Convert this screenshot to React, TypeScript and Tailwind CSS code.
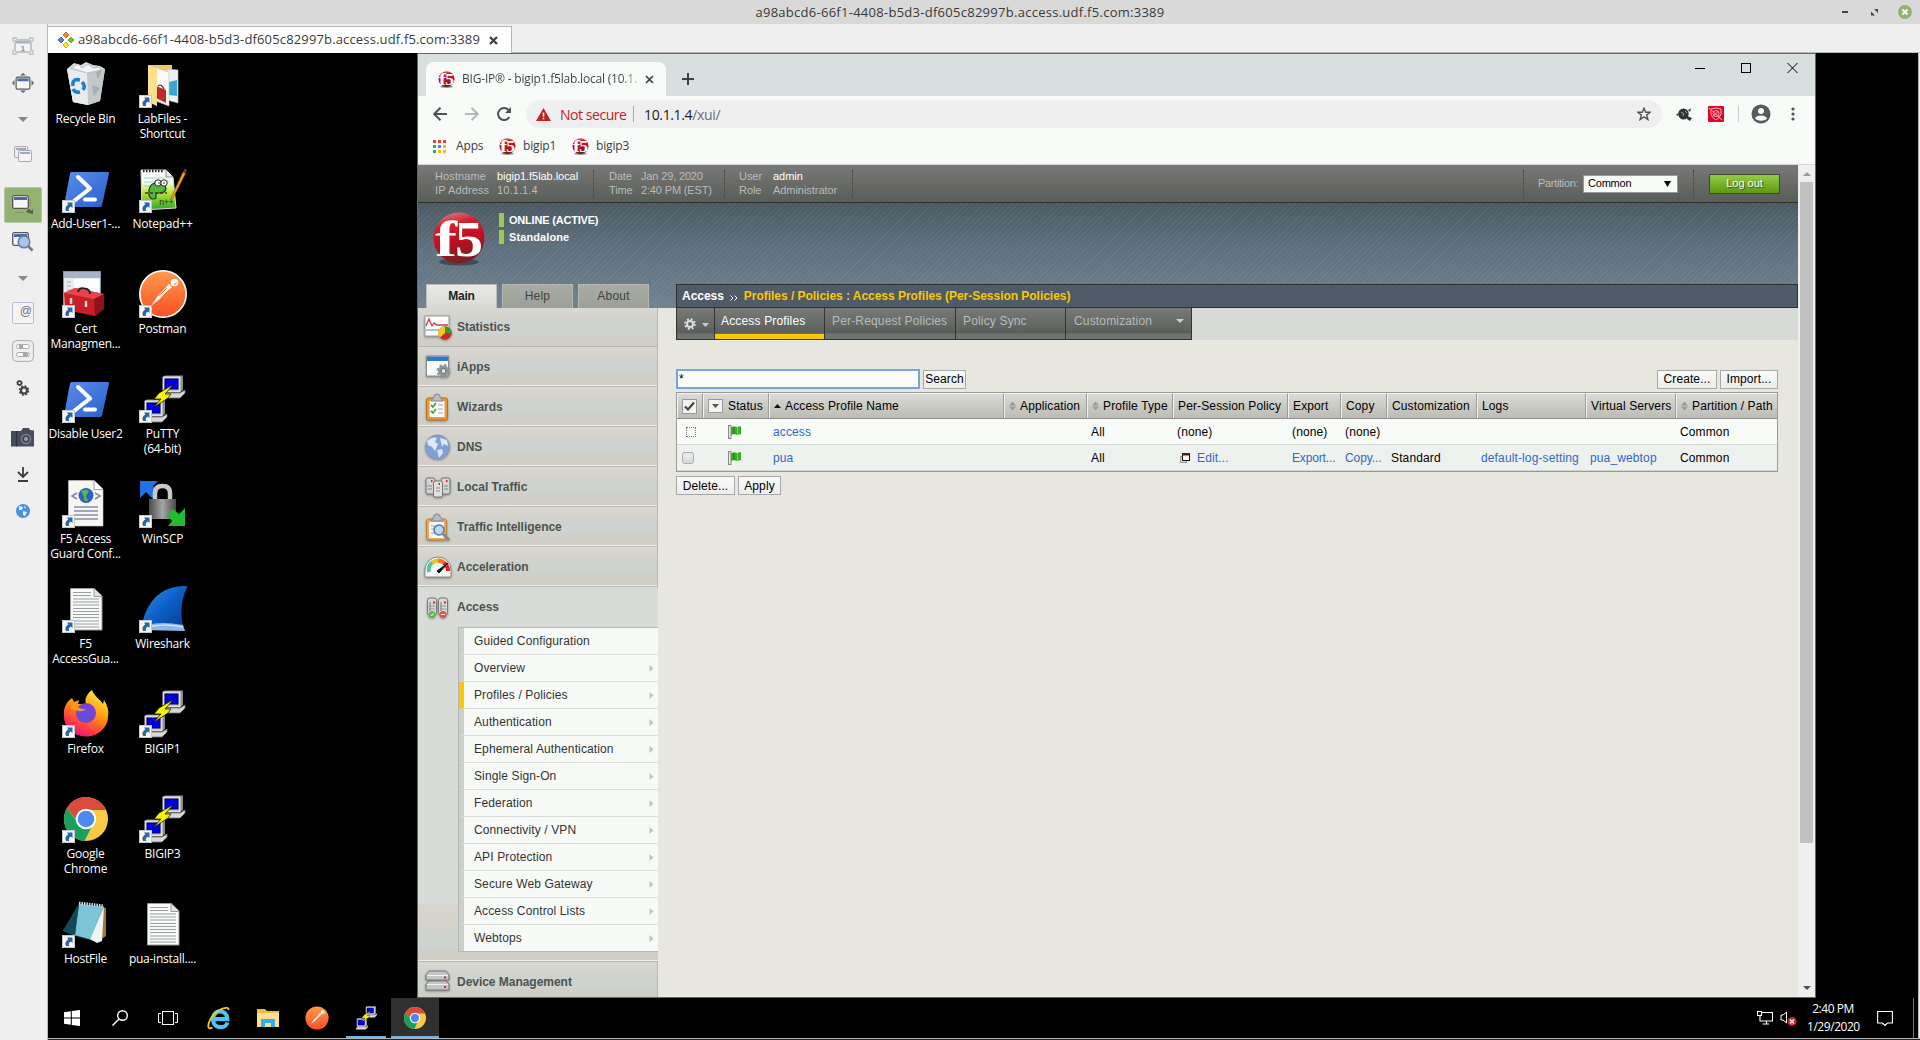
import React from "react";

/* ---------- shared drawings ---------- */

function F5Ball({ size }: { size: number }) {
  return (
    <svg width={size} height={size} viewBox="0 0 54 54" className="shrink-0">
      <defs>
        <linearGradient id="ball" x1="0" y1="0" x2="0.25" y2="1">
          <stop offset="0" stopColor="#e58f92" />
          <stop offset="0.3" stopColor="#d0222f" />
          <stop offset="0.6" stopColor="#c60d20" />
          <stop offset="1" stopColor="#7a2024" />
        </linearGradient>
      </defs>
      <ellipse cx="27" cy="50" rx="20" ry="3.5" fill="#1d2126" opacity="0.5" />
      <circle cx="27" cy="26" r="25.5" fill="url(#ball)" />
      <text x="3" y="44" fontSize="51" fontWeight="bold" textLength="22" lengthAdjust="spacingAndGlyphs" fill="#fff" className="font-['Liberation_Serif',serif]">
        f
      </text>
      <text x="23" y="44" fontSize="51" fontWeight="bold" textLength="28" lengthAdjust="spacingAndGlyphs" fill="#fff" className="font-['Liberation_Serif',serif]">
        5
      </text>
    </svg>
  );
}

function ShortcutArrow() {
  return (
    <svg width="13" height="13" viewBox="0 0 13 13" className="absolute bottom-0 left-0">
      <rect x="0.5" y="0.5" width="12" height="12" fill="#f7f7f7" stroke="#c4c8cc" />
      <path d="M5 2.5H10.5V8L8.8 6.4C6.8 7.5 6.4 9 7 11H4.2C2.6 8.5 3.8 6 6.4 4.6Z" fill="#2b62a8" />
    </svg>
  );
}

function PuttyArt({ size = 48 }: { size?: number }) {
  return (
    <svg width={size} height={size} viewBox="0 0 48 48">
      {[[25, 1], [7, 25]].map(([x, y]) => (
        <g key={x} transform={`translate(${x} ${y})`}>
          <path d="M-1 1L1 -0.500H19V14L16 16H0Z" fill="#8c8c8c" />
          <rect x="-1" y="1" width="17" height="15" fill="#c8c8c8" stroke="#fff" strokeWidth="0.8" />
          <rect x="1" y="3" width="13" height="10" fill="#0000e8" stroke="#000060" />
          <path d="M-3 19L0 17H16L21 14V17L16 22H-3Z" fill="#d8d8d8" stroke="#777" strokeWidth="0.8" />
        </g>
      ))}
      <path d="M35 9L20 18L15 24H22L14 33L29 23L32 19H26Z" fill="#f5f500" stroke="#000" strokeWidth="0.7" />
    </svg>
  );
}

function ChromeArt({ size }: { size: number }) {
  return (
    <svg width={size} height={size} viewBox="0 0 48 48">
      <circle cx="24" cy="24" r="22" fill="#f7ca45" />
      <path d="M5 13A22 22 0 0 0 22.500 46L31 29L24 31L16 28Z" fill="#1aa05d" />
      <path d="M24 2A22 22 0 0 1 43.800 15H24L16 27L5 13A22 22 0 0 1 24 2Z" fill="#d94b3d" />
      <circle cx="24" cy="24" r="10.300" fill="#fff" />
      <circle cx="24" cy="24" r="8.300" fill="#4b8bf0" />
    </svg>
  );
}

function PostmanArt({ size, ring = true }: { size: number; ring?: boolean }) {
  return (
    <svg width={size} height={size} viewBox="0 0 48 48">
      <defs>
        <linearGradient id="pm" x1="0" y1="0" x2="0" y2="1">
          <stop offset="0" stopColor="#ff9a4a" />
          <stop offset="1" stopColor="#f94f26" />
        </linearGradient>
      </defs>
      <circle cx="24" cy="24" r="23.200" fill="url(#pm)" stroke={ring ? "#fff" : "none"} strokeWidth="1.6" />
      <circle cx="35.500" cy="12.500" r="3.800" fill="#fff" />
      <path d="M37 12.500A2 2 0 0 1 35 14.500" stroke="#f9702f" fill="none" />
      <path d="M30 14L33 17L22 28L12 36L18 27Z" fill="#fff" />
      <path d="M28 18L20 26M31 19L21 29" stroke="#f9702f" strokeWidth="0.9" />
    </svg>
  );
}

function PowerShellArt() {
  return (
    <svg width="48" height="48" viewBox="0 0 48 48">
      <defs>
        <linearGradient id="ps" x1="0" y1="0" x2="1" y2="1">
          <stop offset="0" stopColor="#5a8df0" />
          <stop offset="1" stopColor="#2a60c4" />
        </linearGradient>
      </defs>
      <path d="M9.500 7H46Q47.500 7 47 8.500L40 40.500Q39.500 42 38 42H3Q1.500 42 2 40.500L8 8.500Q8.300 7 9.500 7Z" fill="url(#ps)" />
      <path d="M16 12L28 23.500L12 36M23 34.500H33" fill="none" stroke="#fff" strokeWidth="4" strokeLinecap="round" strokeLinejoin="round" />
    </svg>
  );
}

function TextDocArt() {
  return (
    <svg width="48" height="48" viewBox="0 0 48 48">
      <path d="M8.500 3.500H32L40 11V45H8.500Z" fill="#f7f9f9" stroke="#9a9a9a" />
      <path d="M32 3.500V11.500H40" fill="#dfe2e2" stroke="#9a9a9a" />
      <path d="M11 7.500H29M11 10.500H29M11 14H37M11 17H37M11 20H37M11 23.500H37M11 26.500H37M11 29.500H37M11 32.500H37M11 36H37M11 39H37M11 42H37" stroke="#9b9fa0" />
    </svg>
  );
}

function RecycleArt() {
  return (
    <svg width="48" height="48" viewBox="0 0 48 48">
      <path d="M5 9L12 3L19 5L24 2L31 5L38 6L43 9L38 41L26 45L11 42Z" fill="#dcdedf" />
      <path d="M5 9L25 13L43 9L38 41L26 45L11 42Z" fill="#c3c8ca" />
      <path d="M5 9L25 13L26 45L11 42Z" fill="#e9ebec" />
      <path d="M34 12L40 9L36 20ZM30 25L38 28L32 36Z" fill="#a7adb0" />
      <path d="M9 8L16 4L20 8L26 4L31 8L38 7L39 10L25 13Z" fill="#f3f4f4" stroke="#a9aeb0" strokeWidth="0.7" />
      <g fill="none" stroke="#1683d8" strokeWidth="3.6">
        <path d="M11 26Q10 20 15 19.500L18 20" />
        <path d="M20 22Q24 26 21 30" />
        <path d="M18 32Q13 33 11 29" />
      </g>
    </svg>
  );
}

function FolderFilesArt() {
  return (
    <svg width="48" height="48" viewBox="0 0 48 48">
      <path d="M9 5H33V40H9Z" fill="#f0c963" />
      <path d="M28 9L39 10V43L28 40Z" fill="#eef1f3" stroke="#b9bcc0" strokeWidth="0.6" />
      <path d="M30 22L38 20V36L30 35Z" fill="#3aa7d0" />
      <path d="M14 7L30 12V46L14 40Z" fill="#fafafa" stroke="#c0c0c0" strokeWidth="0.6" />
      <path d="M17 26L27 30V43L17 38Z" fill="#c8242c" />
      <path d="M19 26Q22 23 25 29" fill="none" stroke="#333" strokeWidth="1.2" />
      <path d="M9 5L18 9V46L9 42Z" fill="#fbe08d" />
    </svg>
  );
}

function NotepadPPArt() {
  return (
    <svg width="48" height="48" viewBox="0 0 48 48">
      <defs>
        <linearGradient id="npp" x1="0" y1="0" x2="0" y2="1">
          <stop offset="0.3" stopColor="#f6fbf4" />
          <stop offset="0.55" stopColor="#b9e83a" />
          <stop offset="1" stopColor="#2fa32b" />
        </linearGradient>
      </defs>
      <path d="M2 5H27L34 12L37 43L3 45Z" fill="url(#npp)" stroke="#ddd" />
      <path d="M4 6H25" stroke="#222" strokeWidth="2.5" strokeDasharray="1.5 1.5" />
      <path d="M5 13H26M5 17H30M5 21H12" stroke="#a7c9da" />
      <path d="M27 5V12H34" fill="#e8e8e8" stroke="#777" strokeWidth="0.8" />
      <path d="M10 30Q9 18 18 18Q26 17 27 24Q26 28 20 28Q16 28 17 33Q12 36 10 30Z" fill="#4fb93d" stroke="#173e12" strokeWidth="1.2" />
      <circle cx="19" cy="18" r="3.200" fill="#fff" stroke="#222" />
      <circle cx="25" cy="18" r="3.200" fill="#fff" stroke="#222" />
      <circle cx="20" cy="18" r="0.800" fill="#222" />
      <circle cx="25" cy="18" r="0.800" fill="#222" />
      <path d="M6 28H28" stroke="#4d2d50" strokeWidth="1.4" strokeDasharray="3 2" />
      <text x="20" y="40" fontSize="9" fill="#173e12" className="font-['Liberation_Mono',monospace]" textLength="15">n++</text>
      <path d="M31 35L44 7L46.500 8.500L34 33Z" fill="#efa51b" stroke="#8d5a10" strokeWidth="0.6" />
      <path d="M44 7L45.500 3.500L48 5L46.500 8.500Z" fill="#8a2c2c" />
    </svg>
  );
}

function ToolboxArt() {
  return (
    <svg width="48" height="48" viewBox="0 0 48 48">
      <rect x="1.500" y="1.500" width="37" height="34" fill="#e9ecef" stroke="#8494a8" />
      <rect x="2" y="2" width="36" height="6" fill="#a9b5c6" />
      <rect x="12" y="9" width="25" height="22" fill="#fdfdfd" />
      <path d="M5 12H9M5 16H9M5 20H9" stroke="#aaa" />
      <path d="M2 23L13 18L42 24V39L33 46L3 40Z" fill="#c81f25" />
      <path d="M2 23L13 18L42 24L32 29Z" fill="#e8444a" />
      <path d="M32 29L42 24V39L33 46Z" fill="#8e1217" />
      <path d="M16 22Q17 17 22 18.500Q28 19 28 24" fill="none" stroke="#222" strokeWidth="2" />
      <path d="M9 28V34M24 31V37" stroke="#d8d8d8" strokeWidth="2.500" />
    </svg>
  );
}

function CodeDocArt() {
  return (
    <svg width="48" height="48" viewBox="0 0 48 48">
      <path d="M6.500 0.500H32L41 9V46H6.500Z" fill="#f6f6f3" stroke="#ccc" strokeWidth="0.6" />
      <path d="M32 0.500V9.500H41" fill="#fff" stroke="#888" strokeWidth="0.8" />
      <path d="M15 13L10 16L15 19M33 13L38 16L33 19" fill="none" stroke="#8487a8" strokeWidth="1.6" />
      <circle cx="24" cy="15.500" r="7.500" fill="#2f5fc4" />
      <path d="M19 11Q24 8 27 11L24 16L26 21Q21 22 22 17Z" fill="#57b64c" />
      <path d="M12 27H36M12 31H36M12 35H36M12 39H36" stroke="#8a8db0" strokeWidth="1.6" />
    </svg>
  );
}

function WinScpArt() {
  return (
    <svg width="48" height="48" viewBox="0 0 48 48">
      <defs>
        <linearGradient id="lock" x1="0" y1="0" x2="1" y2="0">
          <stop offset="0" stopColor="#4a4a4a" />
          <stop offset="0.5" stopColor="#a5a5a5" />
          <stop offset="1" stopColor="#4a4a4a" />
        </linearGradient>
      </defs>
      <path d="M1 1H19L14 6L19 12L13 18L7 12L1 18Z" fill="#1f72e8" />
      <path d="M16 20V13Q16 6 23.500 6Q31 6 31 13V20" fill="none" stroke="#c9c9c9" strokeWidth="4.500" />
      <rect x="10" y="19" width="27" height="20" fill="url(#lock)" />
      <path d="M46 46H29L33 41L28 35L34 29L40 34L46 28Z" fill="#22bb33" />
    </svg>
  );
}

function WiresharkArt() {
  return (
    <svg width="48" height="48" viewBox="0 0 48 48">
      <defs>
        <linearGradient id="ws" x1="0" y1="0" x2="1" y2="1">
          <stop offset="0" stopColor="#3a8df0" />
          <stop offset="0.5" stopColor="#0b5ec4" />
          <stop offset="1" stopColor="#063a90" />
        </linearGradient>
      </defs>
      <path d="M48 1C22 0 7 16 2 44L46 46C41 34 41 16 48 3Z" fill="url(#ws)" />
      <path d="M8 40Q22 36 44 40L46 46L3 45Z" fill="#8fb6ea" />
      <path d="M10 42Q24 38 44 42" fill="none" stroke="#fff" strokeWidth="0.8" />
    </svg>
  );
}

function FirefoxArt() {
  return (
    <svg width="48" height="48" viewBox="0 0 48 48">
      <defs>
        <linearGradient id="ff" x1="0.8" y1="0" x2="0.3" y2="1">
          <stop offset="0" stopColor="#fff04a" />
          <stop offset="0.45" stopColor="#ff980e" />
          <stop offset="0.8" stopColor="#ff3647" />
          <stop offset="1" stopColor="#e31587" />
        </linearGradient>
      </defs>
      <path d="M30 0C32 6 38 9 41 14L42 10C46 16 47 22 46 27A22 20 0 0 1 2 26C1 19 4 12 10 8L12 12L17 10L16 14H24C22 8 26 3 30 0Z" fill="url(#ff)" />
      <circle cx="24" cy="23" r="10" fill="#7a3fd4" />
      <circle cx="22" cy="25" r="7" fill="#5c55dd" opacity="0.7" />
      <path d="M9 18Q18 24 24 19Q16 20 12 13Z" fill="#ff9a20" />
    </svg>
  );
}

function HostFileArt() {
  return (
    <svg width="48" height="48" viewBox="0 0 48 48">
      <path d="M38 6L44 8L44 36L38 40Z" fill="#a8752e" />
      <path d="M17 4L42 7L36 42L14 36L1 31Z" fill="#2c7f92" />
      <path d="M17 4L42 7L28 39L13 35Z" fill="#7cc5d6" />
      <path d="M42 7L40 41L35 43L28 39Z" fill="#eef4f5" />
      <path d="M17 4L13 35L1 31Z" fill="#134a58" />
      <path d="M17 3L42 6" stroke="#ddd" strokeWidth="3" strokeDasharray="1.500 1" />
    </svg>
  );
}

/* ---------- desktop ---------- */

type DesktopItem = { lines: string[]; art: React.ReactNode; shortcut?: boolean };

const desktopItems: DesktopItem[] = [
  { lines: ["Recycle Bin"], art: <RecycleArt />, shortcut: false },
  { lines: ["LabFiles -", "Shortcut"], art: <FolderFilesArt /> },
  { lines: ["Add-User1-..."], art: <PowerShellArt /> },
  { lines: ["Notepad++"], art: <NotepadPPArt /> },
  { lines: ["Cert", "Managmen..."], art: <ToolboxArt /> },
  { lines: ["Postman"], art: <PostmanArt size={48} /> },
  { lines: ["Disable User2"], art: <PowerShellArt /> },
  { lines: ["PuTTY", "(64-bit)"], art: <PuttyArt /> },
  { lines: ["F5 Access", "Guard Conf..."], art: <CodeDocArt /> },
  { lines: ["WinSCP"], art: <WinScpArt /> },
  { lines: ["F5", "AccessGua..."], art: <TextDocArt /> },
  { lines: ["Wireshark"], art: <WiresharkArt /> },
  { lines: ["Firefox"], art: <FirefoxArt /> },
  { lines: ["BIGIP1"], art: <PuttyArt /> },
  { lines: ["Google", "Chrome"], art: <ChromeArt size={48} /> },
  { lines: ["BIGIP3"], art: <PuttyArt /> },
  { lines: ["HostFile"], art: <HostFileArt /> },
  { lines: ["pua-install...."], art: <TextDocArt />, shortcut: false },
];

function DesktopIcons() {
  return (
    <div className="-ml-px grid w-[154px] auto-rows-[105px] grid-cols-[77px_77px] pt-[7px]">
      {desktopItems.map((d) => (
        <div key={d.lines.join()} className="flex flex-col items-center">
          <div className="relative h-[48px] w-[48px]">
            {d.art}
            {d.shortcut !== false && <ShortcutArrow />}
          </div>
          <div className="mt-[3px] text-center font-['Open_Sans',sans-serif] text-[12px] leading-[15px] tracking-[-0.25px] whitespace-nowrap text-white">
            {d.lines.map((l) => (
              <div key={l}>{l}</div>
            ))}
          </div>
        </div>
      ))}
    </div>
  );
}

function Taskbar() {
  return (
    <div className="absolute inset-x-0 bottom-0 flex h-10 items-stretch bg-black">
      <div className="flex w-12 items-center justify-center">
        <svg width="16" height="16" viewBox="0 0 16 16" fill="#fff">
          <path d="M0 2.200L6.800 1.200V7.500H0ZM7.800 1L16 0V7.500H7.800ZM0 8.500H6.800V14.800L0 13.800ZM7.800 8.500H16V16L7.800 15Z" />
        </svg>
      </div>
      <div className="flex w-12 items-center justify-center">
        <svg width="16" height="16" viewBox="0 0 16 16" fill="none" stroke="#fff" strokeWidth="1.4">
          <circle cx="10.500" cy="5.500" r="4.800" />
          <path d="M7 9L0.500 15.500" />
        </svg>
      </div>
      <div className="flex w-12 items-center justify-center">
        <svg width="20" height="14" viewBox="0 0 20 14" fill="none" stroke="#fff">
          <rect x="4.500" y="0.500" width="11" height="13" />
          <path d="M3 2.500H0.500V11.500H3M17 2.500H19.500V11.500H17" />
        </svg>
      </div>
      <div className="ml-[3px] flex w-12 items-center justify-center">
        <svg width="24" height="24" viewBox="0 0 24 24" fill="none">
          <path d="M6 13.200H20.300C20.300 3.500 6.500 2.500 6 12.500C5.500 23 18.500 23.500 20.500 16.500" stroke="#4cc5f4" strokeWidth="4.200" />
          <path d="M21.500 4C22.500 -1 9 3 3.500 13C0 20 0.500 24 5.500 21.500" stroke="#f5c52c" strokeWidth="1.800" />
        </svg>
      </div>
      <div className="flex w-[50px] items-center justify-center">
        <svg width="22" height="20" viewBox="0 0 22 20">
          <path d="M0 1H8L10 3H22V19H0Z" fill="#e8bd4a" />
          <path d="M0 5H22V19H0Z" fill="#fbe093" />
          <path d="M4 19V11H18V19H14V15H8V19Z" fill="#33aee0" />
        </svg>
      </div>
      <div className="flex w-12 items-center justify-center">
        <PostmanArt size={24} ring={false} />
      </div>
      <div className="ml-[5px] flex w-10 flex-col items-center justify-between border-b-2 border-[#6db4e8] pt-2">
        <PuttyArt size={24} />
      </div>
      <div className="ml-[5px] flex w-12 items-start justify-center border-b-2 border-[#6db4e8] bg-[#303030] pt-2">
        <ChromeArt size={24} />
      </div>
      <div className="ml-auto flex items-center text-white">
        <svg width="16" height="14" viewBox="0 0 16 14" fill="none" stroke="#fff" strokeWidth="1.100">
          <path d="M5 1.500H15.500V10H3V5M0.500 0.500H4.500V4.500H0.500ZM9.500 10V13M5.500 13H12" />
        </svg>
        <svg width="18" height="16" viewBox="0 0 18 16" className="ml-[7px]">
          <path d="M1 5H3L6.500 2V13L3 10H1Z" fill="none" stroke="#fff" />
          <circle cx="12" cy="11.500" r="4.500" fill="#d8202c" />
          <path d="M10 9.500L14 13.500M14 9.500L10 13.500" stroke="#fff" strokeWidth="1.200" />
        </svg>
        <div className="ml-[9px] w-[52px] text-center font-['Open_Sans',sans-serif] text-[12px] leading-[18px] tracking-[-0.45px] whitespace-nowrap">
          <div>2:40 PM</div>
          <div>1/29/2020</div>
        </div>
        <svg width="16" height="17" viewBox="0 0 16 17" className="ml-[18px]" fill="none" stroke="#fff" strokeWidth="1.100">
          <path d="M0.600 1.500H15.400V13H10.500L8 15.500L5.500 13H0.600Z" />
        </svg>
        <div className="mr-1 ml-[20px] h-10 w-px bg-[#777]" />
      </div>
    </div>
  );
}

/* ---------- remote viewer toolbar ---------- */

function WindowGlyph() {
  return (
    <g>
      <rect x="0.700" y="0.700" width="15.600" height="12.600" rx="1.500" fill="#f6f6f6" stroke="#555" strokeWidth="1.300" />
      <rect x="2" y="2" width="13" height="3" fill="#4a6da8" />
    </g>
  );
}

function CaretDown() {
  return (
    <svg width="10" height="5" viewBox="0 0 10 5">
      <path d="M0 0H10L5 5Z" fill="#888" />
    </svg>
  );
}

function RemoteToolbar() {
  return (
    <div className="flex w-[47px] shrink-0 flex-col items-center bg-[#efefef] pr-px">
      <div className="flex h-[42px] items-center justify-center">
        <svg width="22" height="18" viewBox="0 0 22 18" className="mt-0.5">
          <path d="M1 5V1H5M17 1H21V5M21 13V17H17M5 17H1V13" fill="none" stroke="#bbb" strokeWidth="1.300" />
          <rect x="3" y="3" width="16" height="12" rx="1.500" fill="#f3f3f3" stroke="#999" />
          <rect x="4" y="4" width="14" height="2.500" fill="#a8b6cf" />
          <text x="8.800" y="13.500" fontSize="7.500" fontWeight="bold" fill="#8a8a8a" className="font-['Liberation_Sans',sans-serif]">1</text>
        </svg>
      </div>
      <div className="flex h-[34px] items-center justify-center">
        <svg width="22" height="20" viewBox="0 0 22 20">
          <g transform="translate(3.500 3.500) scale(.88 .95)"><WindowGlyph /></g>
          <path d="M8 2.500L11 0L14 2.500ZM8 17.500L11 20L14 17.500ZM2.500 7L0 10L2.500 13ZM19.500 7L22 10L19.500 13Z" fill="#666" />
        </svg>
      </div>
      <div className="flex h-[38px] items-center"><CaretDown /></div>
      <div className="flex h-[32px] items-center justify-center">
        <svg width="18" height="16" viewBox="0 0 18 16" opacity="0.55">
          <rect x="0.600" y="0.600" width="13" height="11" rx="1" fill="#f4f4f4" stroke="#666" />
          <rect x="2" y="2" width="10" height="2" fill="#5673a5" />
          <rect x="4.600" y="4.600" width="13" height="11" rx="1" fill="#f8f8f8" stroke="#666" />
          <rect x="6" y="6" width="10" height="2" fill="#5673a5" />
        </svg>
      </div>
      <div className="mt-[17px] flex h-[36px] w-[38px] items-center justify-center rounded-[2px] border border-[#b6c5a5] bg-[#92b372]">
        <svg width="22" height="20" viewBox="0 0 22 20">
          <WindowGlyph />
          <path d="M14 17L20 19H21V14L19 16L17 13.500Z" fill="#5b5f50" />
          <path d="M18.500 4V11M3 17.500H12" stroke="#6f8a55" strokeDasharray="2 1" />
        </svg>
      </div>
      <div className="flex h-[38px] items-center justify-center">
        <svg width="22" height="20" viewBox="0 0 22 20">
          <WindowGlyph />
          <circle cx="12" cy="10" r="5.800" fill="#a9c4ea" stroke="#6c7f9c" strokeWidth="1.600" />
          <path d="M16.500 14.500L20.500 18.500" stroke="#777" strokeWidth="2.600" />
        </svg>
      </div>
      <div className="flex h-[34px] items-center"><CaretDown /></div>
      <div className="mt-[7px] flex h-[22px] w-[22px] items-start justify-end rounded-[2px] border border-[#b8bfd0] bg-[#f4f4f4] pr-px font-['Liberation_Sans',sans-serif] text-[12px] leading-[16px] text-[#6d7186]">
        @
      </div>
      <svg width="22" height="22" viewBox="0 0 22 22" className="mt-[16px]" fill="none" stroke="#aaa">
        <rect x="0.600" y="0.600" width="20.800" height="20.800" rx="4" />
        <rect x="4.500" y="4.500" width="13" height="4" rx="2" fill="#fff" />
        <rect x="4.500" y="12.500" width="13" height="4" rx="2" fill="#fff" />
        <path d="M7 6.500H11M11 14.500H16" strokeWidth="3" />
      </svg>
      <svg width="14" height="16" viewBox="0 0 14 16" className="mt-[18px]" fill="none" stroke="#444">
        <circle cx="3.500" cy="3" r="1.900" strokeWidth="1.600" />
        <circle cx="3.500" cy="3" r="2.700" strokeDasharray="1 1" />
        <circle cx="8" cy="10.500" r="3" strokeWidth="2.200" />
        <circle cx="8" cy="10.500" r="4.500" strokeWidth="1.500" strokeDasharray="2 1.530" />
      </svg>
      <svg width="24" height="19" viewBox="0 0 24 19" className="mt-[32px]">
        <path d="M0 3H10L12 0H18L19 2L23 2.500V18.500H0Z" fill="#474c5c" />
        <path d="M5.500 3V18.500" stroke="#2d313e" />
        <circle cx="15" cy="11" r="5.300" fill="#7b8396" />
        <circle cx="15" cy="11" r="3.800" fill="#3f4455" />
        <circle cx="15" cy="11" r="2" fill="#99a2b8" />
      </svg>
      <svg width="12" height="15" viewBox="0 0 12 15" className="mt-[20px]" fill="none" stroke="#3c3c3c" strokeWidth="1.800">
        <path d="M6 0V10M1 5L6 10L11 5M1 14H11" />
      </svg>
      <svg width="14" height="14" viewBox="0 0 14 14" className="mt-[22px]">
        <circle cx="7" cy="7" r="7" fill="#4a90e2" />
        <path d="M3 2L7 3L6 6L3 6ZM8 2L10 3L9 5ZM7 7L11 8L9 12L7 11Z" fill="#e9f2fd" />
      </svg>
    </div>
  );
}

/* ---------- admin page ---------- */

const navArt: Record<string, React.ReactNode> = {
  Statistics: (
    <>
      <rect x="1" y="2" width="24" height="20" fill="#fbfbfb" stroke="#999" />
      <path d="M2 12L5 5L8 12L10 9L13 11H24" fill="none" stroke="#c4424a" strokeWidth="1.300" />
      <path d="M2 16H24" stroke="#9fc3e0" strokeWidth="2" />
      <circle cx="21" cy="19" r="6.500" fill="#d8232c" stroke="#7a5a20" strokeWidth="0.500" />
      <path d="M21 19V12.500A6.500 6.500 0 0 0 16 23.500Z" fill="#f1c91f" />
      <path d="M21 19V12.500A6.500 6.500 0 0 1 27.500 19Z" fill="#3a9a2d" />
    </>
  ),
  iApps: (
    <>
      <rect x="2.500" y="3" width="22" height="20" fill="#f9fcfd" stroke="#8c8c8c" />
      <rect x="3" y="3.500" width="21" height="4.500" fill="#2f7cc4" />
      <circle cx="19.500" cy="18" r="5.500" fill="#8d9798" stroke="#8d9798" strokeWidth="3" strokeDasharray="2.300 2" />
      <circle cx="19.500" cy="18" r="2.500" fill="#dfe3e3" stroke="#667" />
    </>
  ),
  Wizards: (
    <>
      <rect x="2.500" y="5" width="21" height="22" rx="2" fill="#eb9a33" stroke="#b87018" />
      <rect x="5.500" y="8" width="15" height="16" fill="#fbfbff" />
      <path d="M7 12L9 14L12 10M7 18L9 20L12 16" fill="none" stroke="#45a92c" strokeWidth="1.800" />
      <path d="M14 12H19M14 16H19M14 20H19" stroke="#99a3cc" />
      <path d="M7 8L10 4A3 3 0 0 1 16 4L19 8Z" fill="#b9bdbf" stroke="#888" />
    </>
  ),
  DNS: (
    <>
      <circle cx="13.500" cy="14" r="12" fill="#7f9fd8" stroke="#8a97b0" />
      <path d="M3 8Q8 3 13 5L11 9L14 11L11 18L8 14L4 12ZM16 5L23 7L24 13L20 11L18 14L17 10ZM13 17L18 16L19 20L15 25Z" fill="#dbe8fa" />
    </>
  ),
  "Local Traffic": (
    <>
      <rect x="2" y="5" width="9" height="16" rx="2" fill="#d4d4d4" stroke="#777" />
      <rect x="17" y="5" width="9" height="16" rx="2" fill="#d4d4d4" stroke="#777" />
      <rect x="9.500" y="8" width="9" height="16" rx="2" fill="#e0e0e0" stroke="#777" />
      <path d="M3.500 13H8M3.500 16H8M12 15H16M12 18H16M20 13H24M20 16H24" stroke="#888" />
      <path d="M7 8H8.500M14.500 11H16M22 8H23.500" stroke="#e02020" strokeWidth="1.800" />
    </>
  ),
  "Traffic Intelligence": (
    <>
      <rect x="2.500" y="6" width="20" height="21" rx="2" fill="#e9a95c" stroke="#b98040" />
      <rect x="5" y="9" width="15" height="16" fill="#f6f8fb" />
      <path d="M7 8L10 4A3 3 0 0 1 16 4L19 8Z" fill="#b9bdbf" stroke="#888" />
      <path d="M7 13H12M7 16H11M7 20H12" stroke="#8fa3c8" />
      <circle cx="15" cy="17" r="5" fill="#bcd8f5" stroke="#5577a8" strokeWidth="1.500" />
      <path d="M19 21L25 27" stroke="#888" strokeWidth="3" />
    </>
  ),
  Acceleration: (
    <>
      <path d="M1 23V17A13 13 0 0 1 27 17V23Q27 24 26 24H2Q1 24 1 23Z" fill="#f6f6f4" stroke="#888" />
      <path d="M5 19A9 9 0 0 1 9 9" fill="none" stroke="#59c2a4" strokeWidth="4" />
      <path d="M8 10A9 9 0 0 1 15 7.500" fill="none" stroke="#edc02b" strokeWidth="4" />
      <path d="M14 7.500A9 9 0 0 1 21 11" fill="none" stroke="#ef7c1f" strokeWidth="4" />
      <path d="M20 10A9 9 0 0 1 24 18" fill="none" stroke="#dd2020" strokeWidth="4" />
      <path d="M13 18L24 10L15 20Z" fill="#111" stroke="#111" />
    </>
  ),
  Access: (
    <>
      <rect x="3.500" y="4" width="9" height="17" rx="2.500" fill="#d8d8d8" stroke="#777" />
      <rect x="14.500" y="4" width="9" height="17" rx="2.500" fill="#d8d8d8" stroke="#777" />
      <path d="M6 8V17M17 8V17" stroke="#aaa" strokeWidth="2" />
      <path d="M5 12H11M5 15H11M16 12H22M16 15H22" stroke="#888" strokeWidth="0.800" />
      <path d="M9 8.500H11M20 8.500H22" stroke="#e02020" strokeWidth="1.800" />
      <circle cx="8" cy="20.500" r="3.500" fill="#58b848" />
      <path d="M6.500 20.500L7.700 21.700L9.700 19.300" fill="none" stroke="#fff" />
      <circle cx="19" cy="20.500" r="3.500" fill="#e2504a" />
      <path d="M17 20.500H21" stroke="#fff" />
    </>
  ),
  "Device Management": (
    <>
      <path d="M2 7L5 3H22L25 7V12H2Z" fill="#c4c6c6" stroke="#777" />
      <path d="M2 16L5 13H22L25 16V22H2Z" fill="#c4c6c6" stroke="#777" />
      <path d="M3 7.500H24M3 16.500H24" stroke="#f4f4f4" />
      <path d="M20 9.500H22M20 19H22" stroke="#e02040" strokeWidth="2" />
    </>
  ),
};

function NavIcon({ name }: { name: string }) {
  return (
    <svg width="28" height="28" viewBox="0 0 28 28" className="mt-px ml-[6px] shrink-0 drop-shadow-[0_1px_1px_rgba(0,0,0,0.35)]">
      {navArt[name]}
    </svg>
  );
}

function NavRow({ name, className = "h-10" }: { name: string; className?: string }) {
  return (
    <div
      className={`flex shrink-0 items-center border-r border-b border-[#b4b8b4] bg-[linear-gradient(#dad8d3_0px,#d4d1cb_12px,#cfd3cf_12px,#cfd3cf_26px,#d0cfc8_27px,#d0cec6_38px,#f0f0ec_38px)] ${className}`}
    >
      <NavIcon name={name} />
      <span className="ml-[5px] text-[12px] font-bold tracking-[-0.03px] text-[#4d524d]">{name}</span>
    </div>
  );
}

const subItems = [
  "Guided Configuration",
  "Overview",
  "Profiles / Policies",
  "Authentication",
  "Ephemeral Authentication",
  "Single Sign-On",
  "Federation",
  "Connectivity / VPN",
  "API Protection",
  "Secure Web Gateway",
  "Access Control Lists",
  "Webtops",
];

function SideNav() {
  return (
    <div className="flex w-[240px] shrink-0 flex-col overflow-hidden">
      <NavRow name="Statistics" className="h-[39px]" />
      {["iApps", "Wizards", "DNS", "Local Traffic", "Traffic Intelligence", "Acceleration"].map((n) => (
        <NavRow key={n} name={n} />
      ))}
      <div className="flex h-[375px] shrink-0 flex-col border-b border-[#b4b8b4] bg-[linear-gradient(#d8dbd7_0px,#d8dcd8_317px,#d8d5cf_317px,#d5d2cb_343px,#cfd3cf_344px,#cfd3cf_362px,#d0cec6_363px,#d0cec6_373px,#f0f0ec_373px)]">
        <div className="flex h-10 shrink-0 items-center">
          <NavIcon name="Access" />
          <span className="ml-[5px] text-[12px] font-bold text-[#4d524d]">Access</span>
        </div>
        <div className="ml-10 border-y border-l border-[#b4b8b4] bg-[#f7faf7]">
          {subItems.map((s, i) => (
            <div
              key={s}
              className={`flex items-center justify-between border-l-[5px] pr-1 pl-[10px] text-[12px] tracking-[0.120px] text-[#333] ${
                s === "Profiles / Policies" ? "border-l-[#fac800]" : "border-l-[#ccd0cc]"
              } ${i < subItems.length - 1 ? "h-[27px] border-b border-b-[#dcdfdc]" : "h-[26px]"}`}
            >
              <span className="whitespace-nowrap">{s}</span>
              {i > 0 && (
                <svg width="5" height="7" viewBox="0 0 5 7">
                  <path d="M0.500 0L4.500 3.500L0.500 7Z" fill="#c2c4c2" />
                </svg>
              )}
            </div>
          ))}
        </div>
      </div>
      <NavRow name="Device Management" />
    </div>
  );
}

function Sorter() {
  return (
    <svg width="7" height="10" viewBox="0 0 7 10" className="mr-[4px] shrink-0">
      <path d="M0 4.500L3.500 0.500L7 4.500ZM0 5.500L3.500 9.500L7 5.500Z" fill="#9a9a9a" />
    </svg>
  );
}

function Flag() {
  return (
    <svg width="14" height="14" viewBox="0 0 14 14">
      <rect x="0.500" y="0.500" width="2.500" height="13" fill="#e8e8e8" stroke="#888" />
      <path d="M3 2L6 1.500L9 2L13 1V9L9 10L6 9L3 10Z" fill="#35b020" />
      <path d="M6 1.500V9" stroke="#1c7c12" />
      <path d="M9.500 2V9.500" stroke="#7bdc5f" />
    </svg>
  );
}

function Btn({ children, className }: { children: React.ReactNode; className: string }) {
  return (
    <div
      className={`flex h-[19px] items-center justify-center border border-[#a8a8a8] bg-linear-to-b from-[#f9fbf9] to-[#ececec] text-[12px] tracking-[0.100px] whitespace-nowrap text-black ${className}`}
    >
      {children}
    </div>
  );
}

const cols = "grid grid-cols-[26px_66px_235px_83px_86px_115px_53px_46px_90px_109px_90px_101px]";
const headCell = "flex items-center overflow-hidden whitespace-nowrap border-l border-t border-l-[#f4f4f4] border-t-[#f4f4f4] border-r border-r-[#9a9a9a] pl-[4px]";

function ProfilesTable() {
  const link = "text-[#3366cc]";
  return (
    <div className="w-[1102px] border border-[#999] text-[12px] tracking-[0.130px] text-black">
      <div className={`${cols} h-[25px] bg-linear-to-b from-[#dcdcd8] to-[#bcbcb5]`}>
        <div className={headCell}>
          <div className="flex h-[15px] w-[15px] items-center justify-center border border-[#999] bg-[#f2f2f2]">
            <svg width="11" height="11" viewBox="0 0 11 11" fill="none" stroke="#444" strokeWidth="2.200">
              <path d="M1 5.500L4 8.500L10 1.500" />
            </svg>
          </div>
        </div>
        <div className={headCell}>
          <div className="mr-[5px] flex h-[14px] w-[15px] items-center justify-center border border-[#999] bg-[#f2f2f2]">
            <svg width="7" height="4" viewBox="0 0 7 4">
              <path d="M0 0H7L3.500 4Z" fill="#555" />
            </svg>
          </div>
          Status
        </div>
        <div className={headCell}>
          <svg width="7" height="4" viewBox="0 0 7 4" className="mr-[4px]">
            <path d="M0 4H7L3.500 0Z" fill="#111" />
          </svg>
          Access Profile Name
        </div>
        <div className={headCell}><Sorter />Application</div>
        <div className={headCell}><Sorter />Profile Type</div>
        <div className={headCell}>Per-Session Policy</div>
        <div className={headCell}>Export</div>
        <div className={headCell}>Copy</div>
        <div className={headCell}>Customization</div>
        <div className={headCell}>Logs</div>
        <div className={headCell}>Virtual Servers</div>
        <div className="flex items-center border-t border-l border-[#f4f4f4] pl-[4px] whitespace-nowrap"><Sorter />Partition / Path</div>
      </div>
      <div className={`${cols} h-[26px] items-center border-t border-[#8f8f8f] bg-[#f8fbf8]`}>
        <div className="pl-[9px]"><div className="h-[10px] w-[10px] border border-dotted border-[#777]" /></div>
        <div className="pl-[25px]"><Flag /></div>
        <div className={`pl-[4px] ${link}`}>access</div>
        <div />
        <div className="pl-[4px]">All</div>
        <div className="pl-[4px]">(none)</div>
        <div className="pl-[4px]">(none)</div>
        <div className="pl-[4px]">(none)</div>
        <div />
        <div />
        <div />
        <div className="pl-[4px]">Common</div>
      </div>
      <div className={`${cols} h-[27px] items-center border-t border-b border-t-[#d3d6d3] border-b-[#d3d6d3] bg-[#eef2ef]`}>
        <div className="pl-[5px]"><div className="h-[12px] w-[12px] rounded-[3px] border border-[#aaa] bg-linear-to-b from-[#ececec] to-[#d8d8d8]" /></div>
        <div className="pl-[25px]"><Flag /></div>
        <div className={`pl-[4px] ${link}`}>pua</div>
        <div />
        <div className="pl-[4px]">All</div>
        <div className={`flex items-center pl-[7px] ${link}`}>
          <svg width="10" height="10" viewBox="0 0 10 10" className="mr-[7px]">
            <rect x="0.500" y="3.500" width="6" height="6" fill="#ddd" stroke="#999" />
            <rect x="2.500" y="0.500" width="7" height="7" fill="#fff" stroke="#111" />
            <rect x="2.500" y="0.500" width="7" height="1.500" fill="#8c1a10" stroke="#5a120b" />
          </svg>
          Edit...
        </div>
        <div className={`pl-[4px] tracking-[-0.150px] ${link}`}>Export...</div>
        <div className={`pl-[4px] tracking-[-0.100px] ${link}`}>Copy...</div>
        <div className="pl-[4px]">Standard</div>
        <div className={`pl-[4px] whitespace-nowrap ${link}`}>default-log-setting</div>
        <div className={`pl-[4px] ${link}`}>pua_webtop</div>
        <div className="pl-[4px]">Common</div>
      </div>
    </div>
  );
}

function HeadPair({ a, b, av, bv, bright, className }: { a: string; b: string; av: string; bv: string; bright?: boolean; className: string }) {
  return (
    <div className={`-mt-[2px] grid text-[11px] leading-[14px] whitespace-nowrap text-[#b9bcb9] ${className}`}>
      <span>{a}</span>
      <span className={bright ? "tracking-[-0.050px] text-white" : ""}>{av}</span>
      <span>{b}</span>
      <span>{bv}</span>
    </div>
  );
}

function AdminPage() {
  const sep = "h-[28px] w-0 border-l border-dotted border-[#3f423f]";
  const tab = "flex h-8 items-start border-r border-b border-[#333] bg-[linear-gradient(#777a77_0px,#5b5f5b_25px,#6f736f_26px)] pt-[4px] text-[12px] tracking-[0.160px] whitespace-nowrap text-[#b8bbb8]";
  return (
    <div className="flex min-h-0 flex-1 font-['Liberation_Sans',Arial,sans-serif]">
      <div className="flex w-[1380px] shrink-0 flex-col overflow-hidden">
        <div className="flex h-[38px] shrink-0 items-center border-b border-[#2e3030] bg-linear-to-b from-[#797979] to-[#595d58]">
          <HeadPair a="Hostname" av="bigip1.f5lab.local" b="IP Address" bv="10.1.1.4" bright className="ml-[17px] w-[158px] grid-cols-[62px_96px] tracking-[0.120px]" />
          <div className={sep} />
          <HeadPair a="Date" av="Jan 29, 2020" b="Time" bv="2:40 PM (EST)" className="ml-[15px] w-[115px] grid-cols-[32px_83px] tracking-[-0.150px]" />
          <div className={sep} />
          <HeadPair a="User" av="admin" b="Role" bv="Administrator" bright className="ml-[14px] w-[113px] grid-cols-[34px_79px] tracking-[-0.050px]" />
          <div className={sep} />
          <div className={`ml-auto ${sep}`} />
          <span className="ml-[14px] w-[41px] text-[11px] tracking-[-0.300px] text-[#b9bcb9]">Partition:</span>
          <div className="ml-[4px] flex h-[18px] w-[95px] items-center justify-between border border-[#999] bg-[#f8fbf8] pr-[6px] pl-[4px] text-[11px] tracking-[-0.200px] text-black">
            Common
            <svg width="7" height="6" viewBox="0 0 7 6"><path d="M0 0H7L3.500 6Z" /></svg>
          </div>
          <div className={`ml-[15px] ${sep}`} />
          <div className="mr-[18px] ml-[15px] flex h-5 w-[71px] items-center justify-center border border-[#3e4a2c] bg-linear-to-b from-[#93cb43] to-[#5c9a0c] text-[11px] text-white [text-shadow:1px_1px_1px_#2d5205]">
            Log out
          </div>
        </div>

        <div className="flex h-[105px] shrink-0 flex-col justify-between bg-[repeating-linear-gradient(135deg,rgba(255,255,255,0.05)_0px,rgba(255,255,255,0.05)_1px,transparent_1px,transparent_4px),linear-gradient(#4b5a62,#60707f_45%,#6f8391)]">
          <div className="flex">
            <div className="mt-[9px] ml-[14px]"><F5Ball size={54} /></div>
            <div className="mt-[10px] ml-[13px] text-[11px] font-bold text-white">
              <div className="flex h-[14px] items-center border-l-[5px] border-[#97cc50] pl-[5px] tracking-[-0.200px]">ONLINE (ACTIVE)</div>
              <div className="mt-[3px] flex h-[14px] items-center border-l-[5px] border-[#97cc50] pl-[5px] tracking-[0.100px]">Standalone</div>
            </div>
          </div>
          <div className="flex h-6 items-stretch text-[12px] tracking-[0.200px] text-[#3f423f]">
            <div className="ml-2 flex w-[71px] items-center justify-center border border-b-0 border-[#b9bcb9] bg-linear-to-b from-[#e9eae8] to-[#d9d9d4] pb-px font-bold tracking-[-0.200px] text-[#222]">Main</div>
            <div className="ml-[5px] flex w-[71px] items-center justify-center border border-b-0 border-[#b4b7b2] bg-linear-to-b from-[#a9aba5] to-[#9c9f98] pb-px">Help</div>
            <div className="ml-[5px] flex w-[71px] items-center justify-center border border-b-0 border-[#b4b7b2] bg-linear-to-b from-[#a9aba5] to-[#9c9f98] pb-px">About</div>
            <div className="ml-[27px] flex flex-1 items-center border border-[#2d3033] bg-[#4f5b67] pl-[5px] text-[12px] font-bold tracking-[-0.030px] text-white">
              <span>Access</span>
              <svg width="8" height="6" viewBox="0 0 8 6" className="mt-[3px] mr-[6px] ml-[6px]" fill="none" stroke="#fff">
                <path d="M0.500 0.500L3 3L0.500 5.500M4.500 0.500L7 3L4.500 5.500" />
              </svg>
              <span className="text-[#fac800]">Profiles / Policies : Access Profiles (Per-Session Policies)</span>
            </div>
          </div>
        </div>

        <div className="flex min-h-0 flex-1 bg-[#e7e6df]">
          <SideNav />
          <div className="min-w-0 flex-1 pl-[18px]">
            <div className="flex bg-[#d7dad7]">
              <div className={`${tab} w-[39px] border-l pl-[7px]`}>
                <svg width="12" height="12" viewBox="0 0 12 12" className="mt-[6px]" fill="none" stroke="#ddd">
                  <circle cx="6" cy="6" r="3" strokeWidth="2" />
                  <circle cx="6" cy="6" r="4.800" strokeWidth="2" strokeDasharray="2 1.770" />
                </svg>
                <svg width="7" height="4" viewBox="0 0 7 4" className="mt-[11px] ml-[6px]"><path d="M0 0H7L3.500 4Z" fill="#ccc" /></svg>
              </div>
              <div className={`${tab} relative w-[110px] pl-[6px] text-white`}>
                Access Profiles
                <div className="absolute inset-x-0 bottom-0 h-[5px] bg-[#fac800]" />
              </div>
              <div className={`${tab} w-[131px] pl-[7px]`}>Per-Request Policies</div>
              <div className={`${tab} w-[110px] pl-[7px]`}>Policy Sync</div>
              <div className={`${tab} w-[126px] pr-[7px] pl-[8px]`}>
                Customization
                <svg width="8" height="4" viewBox="0 0 8 4" className="mt-[7px] ml-auto"><path d="M0 0H8L4 4Z" fill="#ccc" /></svg>
              </div>
            </div>
            <div className="mt-[29px] flex w-[1102px] items-center text-[12px]">
              <div className="flex h-[20px] w-[244px] items-center border-2 border-[#79a3e0] bg-[#f9fcf9] pl-px text-black">*</div>
              <Btn className="ml-[3px] w-[43px]">Search</Btn>
              <Btn className="ml-auto w-[60px]">Create...</Btn>
              <Btn className="ml-[3px] w-[58px]">Import...</Btn>
            </div>
            <div className="mt-[3px]"><ProfilesTable /></div>
            <div className="mt-[4px] flex gap-[3px]">
              <Btn className="w-[59px]">Delete...</Btn>
              <Btn className="w-[43px]">Apply</Btn>
            </div>
          </div>
        </div>
      </div>

      <div className="flex flex-1 flex-col items-center bg-[#efefef]">
        <svg width="8" height="4" viewBox="0 0 8 4" className="mt-[7px] shrink-0"><path d="M0 4H8L4 0Z" fill="#999" /></svg>
        <div className="mt-[6px] h-[661px] w-[13px] shrink-0 bg-[#c1c1c1]" />
        <svg width="8" height="4" viewBox="0 0 8 4" className="mt-auto mb-[7px] shrink-0"><path d="M0 0H8L4 4Z" fill="#505050" /></svg>
      </div>
    </div>
  );
}

/* ---------- browser window ---------- */

const appDots = [
  "bg-[#ea4335]", "bg-[#ea4335]", "bg-[#ea4335]",
  "bg-[#34a853]", "bg-[#4285f4]", "bg-[#fbbc05]",
  "bg-[#34a853]", "bg-[#fbbc05]", "bg-[#fbbc05]",
];

function BrowserWindow() {
  return (
    <div className="absolute top-0 left-[369px] flex h-[945px] w-[1399px] flex-col border border-[#1e78c2] bg-[#f8fbf8] font-['Open_Sans',sans-serif] text-[#3c4043]">
      <div className="flex h-[42px] shrink-0 items-end bg-[#d8dfde]">
        <div className="ml-2 flex h-[34px] w-[240px] items-center rounded-t-lg bg-[#f8fbf8] pl-[12px]">
          <F5Ball size={17} />
          <div className="ml-[7px] w-[176px] bg-linear-to-r from-[#3c4043] from-90% to-[#c5c8c8] bg-clip-text text-[12px] tracking-[-0.200px] whitespace-nowrap text-transparent">
            BIG-IP® - bigip1.f5lab.local (10.1.
          </div>
          <svg width="9" height="9" viewBox="0 0 9 9" className="ml-[7px]" stroke="#3c4043" strokeWidth="1.700">
            <path d="M1 1L8 8M8 1L1 8" />
          </svg>
        </div>
        <svg width="12" height="12" viewBox="0 0 12 12" className="mb-[11px] ml-[16px]" stroke="#3c4043" strokeWidth="2">
          <path d="M6 0V12M0 6H12" />
        </svg>
        <div className="mr-[17px] mb-[23px] ml-auto flex items-center gap-[36px]">
          <div className="h-px w-[10px] bg-black" />
          <div className="h-[10px] w-[10px] border border-black" />
          <svg width="11" height="10" viewBox="0 0 11 10" stroke="#000"><path d="M0.500 0L10.500 10M10.500 0L0.500 10" /></svg>
        </div>
      </div>

      <div className="flex h-[36px] shrink-0 items-center">
        <svg width="14" height="14" viewBox="0 0 14 14" className="ml-[15px]" fill="none" stroke="#4f5357" strokeWidth="2">
          <path d="M14 7H1.500M7.500 0.700L1.200 7L7.500 13.300" />
        </svg>
        <svg width="14" height="14" viewBox="0 0 14 14" className="ml-[18px]" fill="none" stroke="#b4b7b8" strokeWidth="2">
          <path d="M0 7H12.500M6.500 0.700L12.800 7L6.500 13.300" />
        </svg>
        <svg width="15" height="14" viewBox="0 0 15 14" className="ml-[18px]" fill="none" stroke="#4f5357" strokeWidth="2">
          <path d="M12.300 10A6 6 0 1 1 11.500 3L13 4.500" />
          <path d="M14 0V6H8Z" fill="#4f5357" stroke="none" />
        </svg>
        <div className="ml-[14px] flex h-7 w-[1136px] items-center rounded-full bg-[#efefef] pr-[11px] pl-[10px] text-[14px]">
          <svg width="15" height="13" viewBox="0 0 15 13"><path d="M7.500 0L15 13H0Z" fill="#c5221f" /><path d="M7.500 4.500V8.500M7.500 9.700V11.200" stroke="#fff" strokeWidth="1.500" /></svg>
          <span className="ml-[9px] w-[66px] tracking-[-0.450px] whitespace-nowrap text-[#c5221f]">Not secure</span>
          <div className="ml-[7px] h-4 w-px bg-[#aaa]" />
          <span className="ml-[10px] tracking-[-0.350px] text-[#202124]">10.1.1.4<span className="text-[#6a6e72]">/xui/</span></span>
          <svg width="14" height="14" viewBox="0 0 24 24" className="ml-auto" fill="none" stroke="#555" strokeWidth="2.400">
            <path d="M12 2L15 9H22.500L16.500 13.800L18.700 21.500L12 17L5.300 21.500L7.500 13.800L1.500 9H9Z" />
          </svg>
        </div>
        <svg width="16" height="14" viewBox="0 0 16 14" className="ml-[14px]">
          <ellipse cx="7.500" cy="7" rx="5.200" ry="5.500" fill="#2f3133" />
          <path d="M0 7.500L3 6L2 9ZM12 3L15 1.500L14 5ZM11 9L16 11L14 14L11 12Z" fill="#2f3133" />
          <path d="M5 5L8 7L7 9M9 4L11 6" stroke="#aaa" fill="none" />
        </svg>
        <svg width="16" height="16" viewBox="0 0 16 16" className="ml-[16px]" fill="none" stroke="#ffb3b8">
          <rect width="16" height="16" rx="1" fill="#e3042a" stroke="none" />
          <path d="M3 3L8 2L13 3V8Q12 12 8 14Q4 12 3 8Z" />
          <circle cx="8" cy="7.500" r="3" />
          <path d="M1 2L14 14M6 9.500L10 5.500" />
        </svg>
        <div className="ml-[14px] h-4 w-px bg-[#c6cacb]" />
        <svg width="20" height="20" viewBox="0 0 20 20" className="ml-[12px]">
          <circle cx="10" cy="10" r="9.500" fill="#555b61" />
          <circle cx="10" cy="7" r="3" fill="#f8fbf8" />
          <path d="M4 14.500C5 10.500 15 10.500 16 14.500C13 17.500 7 17.500 4 14.500Z" fill="#f8fbf8" />
        </svg>
        <svg width="4" height="14" viewBox="0 0 4 14" className="ml-[20px]" fill="#4f5357">
          <circle cx="2" cy="2" r="1.600" /><circle cx="2" cy="7" r="1.600" /><circle cx="2" cy="12" r="1.600" />
        </svg>
      </div>

      <div className="flex h-[33px] shrink-0 items-center border-b border-[#d3d8dc] pb-1 text-[12px] tracking-[-0.150px]">
        <div className="ml-[15px] grid grid-cols-3 gap-[2px]">
          {appDots.map((c, i) => (
            <div key={i} className={`h-[3px] w-[3px] ${c}`} />
          ))}
        </div>
        <span className="ml-[10px] w-[27px]">Apps</span>
        <div className="ml-[16px] flex"><F5Ball size={17} /></div>
        <span className="ml-[7px] w-[33px]">bigip1</span>
        <div className="ml-[16px] flex"><F5Ball size={17} /></div>
        <span className="ml-[7px]">bigip3</span>
      </div>

      <AdminPage />
    </div>
  );
}

export default function App() {
  return (
    <div className="flex h-[1040px] w-[1920px] flex-col overflow-hidden bg-[#efefef]">
      <div className="grid h-6 shrink-0 grid-cols-[1fr_auto_1fr] items-center bg-[#d9d9d9] font-['Open_Sans',sans-serif] text-[13px] text-[#3a3a3a]">
        <div />
        <div className="pt-px tracking-[0.270px]">a98abcd6-66f1-4408-b5d3-df605c82997b.access.udf.f5.com:3389</div>
        <div className="flex items-center justify-end pr-2">
          <div className="h-[2px] w-[6px] bg-[#444]" />
          <svg width="8" height="7" viewBox="0 0 8 7" className="ml-[23px]" fill="#444"><path d="M3 0H7V4ZM0 2.500L4 6.500H0Z" /></svg>
          <svg width="14" height="14" viewBox="0 0 14 14" className="ml-[19px]">
            <circle cx="7" cy="7" r="7" fill="#92b372" />
            <path d="M4.500 4.500L9.500 9.500M9.500 4.500L4.500 9.500" stroke="#fff" strokeWidth="2" />
          </svg>
        </div>
      </div>

      <div className="flex min-h-0 flex-1">
        <RemoteToolbar />
        <div className="flex flex-1 flex-col border-l border-[#b5b5b5]">
          <div className="flex h-[29px] shrink-0 items-end">
            <div className="flex h-[27px] w-[464px] items-center border-t border-r border-[#b5b5b5] bg-white pl-[10px] font-['Open_Sans',sans-serif] text-[13px] text-[#3a3a3a]">
              <svg width="16" height="16" viewBox="0 0 16 16" strokeWidth="0.800">
                <path d="M8 0L11 3L8 6L5 3Z" fill="#f0853c" stroke="#c8601c" />
                <path d="M13 5L16 8L13 11L10 8Z" fill="#7cc142" stroke="#4f9020" />
                <path d="M8 10L11 13L8 16L5 13Z" fill="#f5e23c" stroke="#c0a818" />
                <path d="M3 5L6 8L3 11L0 8Z" fill="#5b82c8" stroke="#34589c" />
              </svg>
              <span className="ml-1 tracking-[0.150px] whitespace-nowrap">a98abcd6-66f1-4408-b5d3-df605c82997b.access.udf.f5.com:3389</span>
              <svg width="9" height="9" viewBox="0 0 9 9" className="mr-[13px] ml-auto" stroke="#444" strokeWidth="2.400">
                <path d="M1 1L8 8M8 1L1 8" />
              </svg>
            </div>
            <div className="h-px flex-1 bg-[#b5b5b5]" />
          </div>
          <div className="relative mr-px h-[985px] shrink-0 overflow-hidden border-r border-[#b5b5b5] bg-black">
            <DesktopIcons />
            <Taskbar />
            <BrowserWindow />
          </div>
          <div className="h-px bg-[#b5b5b5]" />
          <div className="h-px bg-[#222]" />
        </div>
      </div>
    </div>
  );
}
